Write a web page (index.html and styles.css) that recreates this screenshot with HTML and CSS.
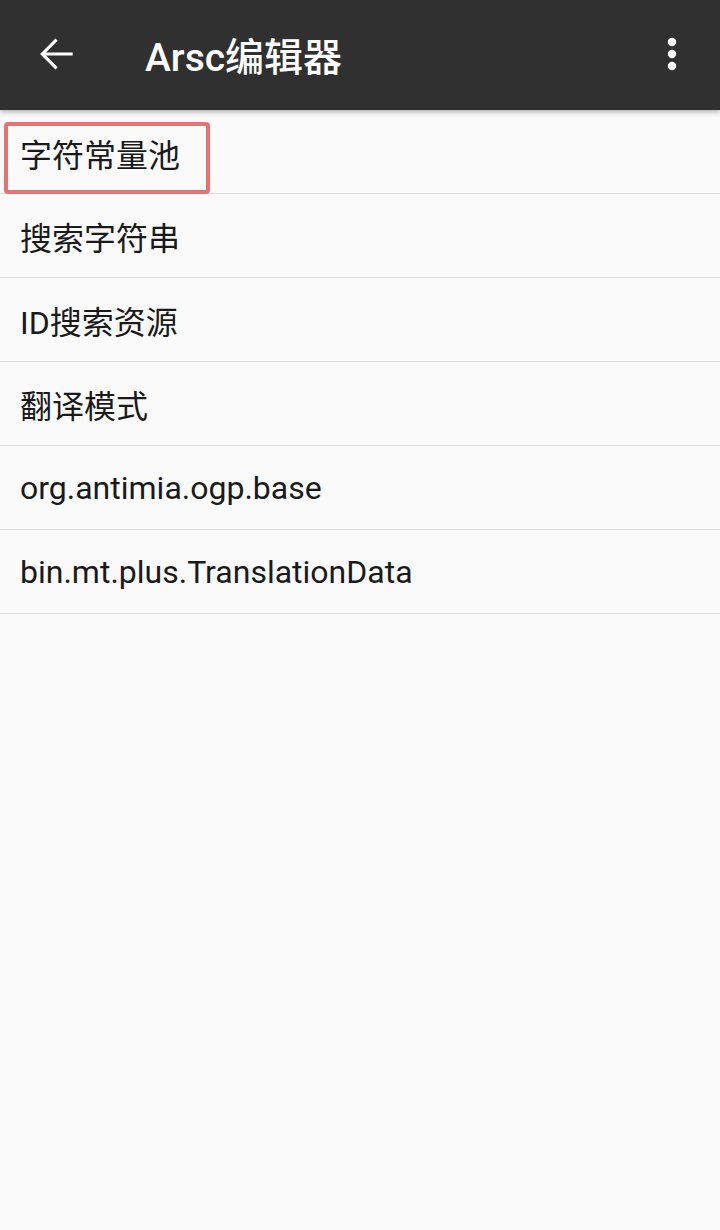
FILE: index.html
```html
<!DOCTYPE html>
<html lang="zh-CN">
<head>
    <meta charset="UTF-8">
    <meta name="viewport" content="width=device-width, initial-scale=1.0">
    <title>Arsc编辑器</title>
    <link rel="stylesheet" href="styles.css">
</head>
<body>
    <div class="toolbar">
        <button class="icon-btn back">
            <svg width="50" height="50" viewBox="0 0 24 24"><path d="M20 11.25H7.2l5.6-5.6L11.75 4.6 4.35 12l7.4 7.4 1.05-1.05-5.6-5.6H20z" fill="#fff"/></svg>
        </button>
        <div class="title">Arsc编辑器</div>
        <button class="icon-btn more">
            <svg width="12" height="36" viewBox="0 0 12 36"><circle cx="6" cy="6" r="4.2" fill="#fff"/><circle cx="6" cy="18" r="4.2" fill="#fff"/><circle cx="6" cy="30" r="4.2" fill="#fff"/></svg>
        </button>
    </div>
    <ul class="list">
        <li class="item"><span class="highlight">字符常量池</span></li>
        <li class="item">搜索字符串</li>
        <li class="item">ID搜索资源</li>
        <li class="item">翻译模式</li>
        <li class="item">org.antimia.ogp.base</li>
        <li class="item">bin.mt.plus.TranslationData</li>
    </ul>
</body>
</html>
```

FILE: styles.css
```css
body {
    margin: 0;
    height: 1230px;
    background-color: #fafafa;
    font-family: Roboto, "Noto Sans CJK SC", sans-serif;
    overflow: hidden;
}

.toolbar {
    position: relative;
    z-index: 1;
    display: flex;
    align-items: center;
    height: 110px;
    background-color: #303030;
    box-shadow: 0 2px 5px rgba(0, 0, 0, 0.3);
    color: #fff;
}

.icon-btn {
    display: flex;
    align-items: center;
    justify-content: center;
    background: none;
    border: none;
    padding: 0;
}

.back {
    width: 50px;
    height: 50px;
    margin-left: 31px;
    margin-top: -2px;
}

.title {
    flex: 1;
    margin-left: 64px;
    margin-top: -2px;
    font-size: 39px;
    font-weight: 500;
}

.more {
    width: 12px;
    height: 36px;
    margin-right: 42px;
    margin-top: -2px;
}

.list {
    list-style: none;
    margin: 0;
    padding: 0;
}

.item {
    display: flex;
    align-items: center;
    height: 83px;
    padding-left: 20px;
    border-bottom: 1px solid #dcdcdc;
    font-size: 32px;
    color: #1a1a1a;
}

.highlight {
    margin-left: -16px;
    margin-top: 12px;
    padding: 0 26px 0 12px;
    height: 64px;
    line-height: 60px;
    border: 4px solid #e57373;
    border-radius: 4px;
}
```
